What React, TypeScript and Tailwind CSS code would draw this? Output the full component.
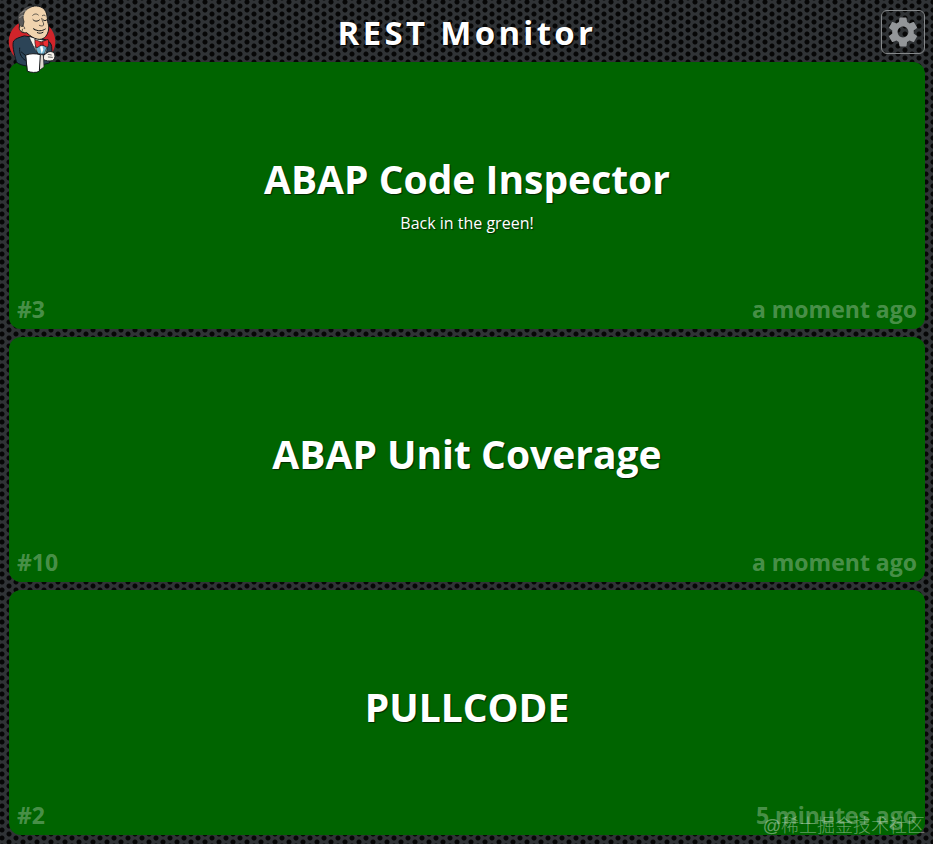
import React from 'react';
import { MdSettings } from 'react-icons/md';

interface Job {
  name: string;
  build: number;
  finished: string;
  claim?: string;
}

const JOBS: Job[] = [
  { name: 'ABAP Code Inspector', build: 3, finished: 'a moment ago', claim: 'Back in the green!' },
  { name: 'ABAP Unit Coverage', build: 10, finished: 'a moment ago' },
  { name: 'PULLCODE', build: 2, finished: '5 minutes ago' },
];

const JenkinsLogo: React.FC<{ className?: string }> = ({ className }) => (
  <svg viewBox="0 0 150 216" className={className} role="img" aria-label="Jenkins" strokeLinejoin="round" strokeLinecap="round">
    {/* backdrop */}
    <ellipse cx="72" cy="113" rx="70" ry="67" fill="#d0242a" />
    {/* jacket */}
    <path d="M48 96c-14 4-26 8-31 15-5 11 0 34 9 64 15 12 45 14 66 10l32-8c7-15 9-35 7-50-2-10-8-17-18-20z" fill="#2c4457" stroke="#0e171e" strokeWidth="3" />
    <path d="M35 132c-2 14 4 30 17 37M40 144l12 10" fill="none" stroke="#0e171e" strokeWidth="3" />
    {/* shirt */}
    <path d="M63 98c6 16 16 36 28 52h22c5-12 6-26 4-38l-17-5z" fill="#f6f2ea" stroke="#0e171e" strokeWidth="2" />
    <path d="M82 126l12-4 16 3 6 7-7 18H91z" fill="#72b3ce" stroke="#0e171e" strokeWidth="2" />
    <path d="M96 128l7-2 3 11-5 12z" fill="#fff" />
    {/* head */}
    <path d="M39 56C34 37 44 16 63 9c19-7 42-3 50 13 5 11 5 21 6 31 2 8 4 13 3 22-2 18-13 31-27 31-15 0-28-10-39-20-9 2-21-3-22-12-1-6 1-14 5-18z" fill="#f0d3ae" stroke="#15191c" strokeWidth="3" />
    {/* hair */}
    <path d="M35 64c-10-20-6-38 8-44C50 8 64 4 78 6 62 11 51 18 48 28c-5 10-2 18 0 25l-3 13z" fill="#5c5a59" stroke="#15191c" strokeWidth="2" />
    <path d="M39 28c4-5 9-7 14-8M35 41c3-5 7-6 12-7" fill="none" stroke="#b8b3ac" strokeWidth="2" />
    <path d="M39 68c5-5 12-1 11 6M45 74c-3 2-4 6-1 8" fill="none" stroke="#15191c" strokeWidth="2" />
    {/* face */}
    <path d="M74 34c6-6 13-5 17-1M103 35c4-3 8-2 10 1" fill="none" stroke="#15191c" strokeWidth="2" />
    <path d="M75 47c5 6 13 6 19 1M105 47c3 4 8 4 12 0" fill="none" stroke="#15191c" strokeWidth="3" />
    <path d="M101 43c1 9 9 16 5 21-3 3-8 2-12 0" fill="none" stroke="#15191c" strokeWidth="2" />
    <path d="M80 76c9 6 22 6 32-1M76 74l5 4M88 86c6 3 12 2 17-1" fill="none" stroke="#15191c" strokeWidth="3" />
    {/* bow tie */}
    <path d="M81 107l19 7 20-8c3 8 2 17-1 24l-18-8-15 10c-5-7-6-17-5-25z" fill="#ef2f33" stroke="#15191c" strokeWidth="2" />
    <path d="M97 113l8 0 1 10-8 1z" fill="#b9181d" stroke="#15191c" strokeWidth="1" />
    {/* hand */}
    <path d="M108 153l12-9c9-3 17-1 20 6 3 9-1 18-7 20-9 2-20 1-26-3z" fill="#f6f2ea" stroke="#15191c" strokeWidth="3" />
    <path d="M120 151l10 2M121 159l12 1" fill="none" stroke="#15191c" strokeWidth="2" />
    {/* mug and towel */}
    <path d="M92 150l14 3 2 36-14 10z" fill="#ded9d0" stroke="#15191c" strokeWidth="2" />
    <path d="M54 153c12-5 30-5 43-1l-3 50c-9 5-26 4-35 0z" fill="#fff" stroke="#15191c" strokeWidth="3" />
  </svg>
);

const JobTile: React.FC<{ job: Job }> = ({ job }) => (
  <li className="flex flex-auto flex-col rounded-xl bg-[#006400] px-2 pt-7">
    <div className="flex flex-1 flex-col items-center justify-center text-center text-white [text-shadow:1px_1px_1px_#002800]">
      <h2 className="text-[39px] leading-[66px] font-bold">{job.name}</h2>
      {job.claim && <p className="text-base leading-[22px]">{job.claim}</p>}
    </div>
    <div className="flex items-center justify-between text-[23px] leading-10 font-bold text-white/30">
      <span>#{job.build}</span>
      <time>{job.finished}</time>
    </div>
  </li>
);

export default function App() {
  return (
    <div className="relative flex min-h-screen flex-col bg-[#303336] bg-[radial-gradient(circle,#060606_2px,transparent_3px),radial-gradient(circle,#060606_2px,transparent_3px)] bg-[length:14px_8px] bg-[position:2px_-2px,9px_2px] pr-2 pb-[9px] pl-[9px] font-['Open_Sans',sans-serif]">
      <header className="relative flex h-[62px] items-center justify-center pt-1">
        <JenkinsLogo className="absolute top-1 left-0 -ml-px h-[72px] w-[50px]" />
        <h1 className="text-[33px] leading-[58px] font-bold tracking-widest text-white [text-shadow:1px_1px_1px_#000]">REST Monitor</h1>
        <button
          type="button"
          aria-label="Settings"
          className="absolute top-2.5 right-0 flex size-11 items-center justify-center rounded-md border border-[#85888a] text-[#939699]"
        >
          <MdSettings className="size-9" />
        </button>
      </header>
      <ul className="flex flex-1 flex-col gap-2">
        {JOBS.map((job) => (
          <JobTile key={job.name} job={job} />
        ))}
      </ul>
      <span className="absolute right-2 bottom-1 font-['Liberation_Sans','Noto_Sans_CJK_SC',sans-serif] text-lg leading-7 font-light text-white/40">
        @稀土掘金技术社区
      </span>
    </div>
  );
}
